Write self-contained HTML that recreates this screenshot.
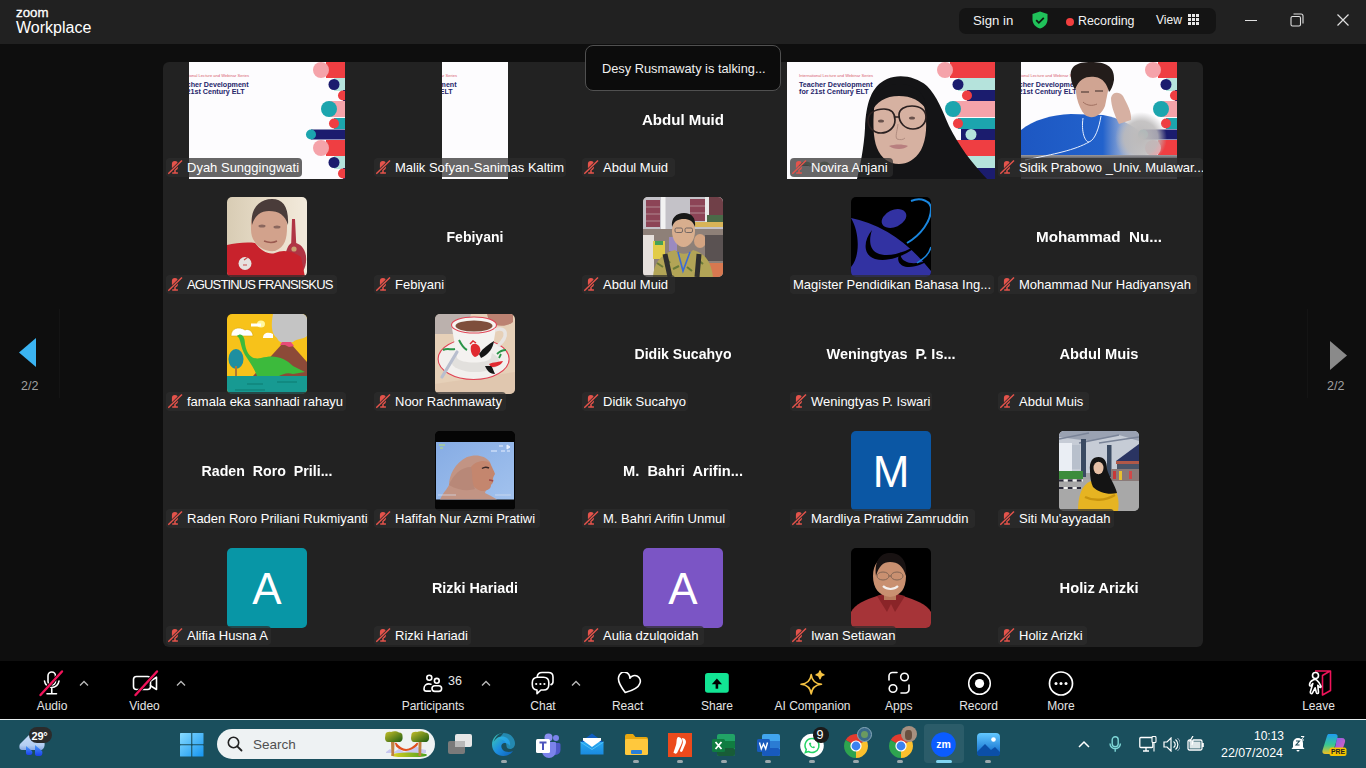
<!DOCTYPE html>
<html><head><meta charset="utf-8"><style>
*{margin:0;padding:0;box-sizing:border-box}
html,body{width:1366px;height:768px;overflow:hidden;background:#0e0e0e;font-family:"Liberation Sans",sans-serif;color:#fff}
.a{position:absolute}
#hdr{left:0;top:0;width:1366px;height:44px;background:#212121}
#panel{left:163px;top:62px;width:1040px;height:585px;background:#222222;border-radius:6px;overflow:hidden}
.tile{position:absolute;width:208px;height:117px;overflow:hidden}
.lbl{position:absolute;left:3px;bottom:2px;height:19px;border-radius:4px;background:rgba(44,44,44,0.72);white-space:nowrap;font-size:13px;line-height:19px;padding-left:21px;color:#fff}
.lbl svg{position:absolute;left:2px;top:2px}
.bn{position:absolute;left:0;width:208px;text-align:center;font-weight:bold;font-size:15.5px;white-space:nowrap;top:49px;color:#fff;transform-origin:104px 50%}
.av{position:absolute;left:64px;top:18px;width:80px;height:80px;border-radius:5px;overflow:hidden}
.letter{font-size:44px;text-align:center;line-height:81px;color:#fff}
#tb{left:0;top:661px;width:1366px;height:58px;background:#000}
#line{left:0;top:719px;width:1366px;height:1px;background:#e8eef0}
#task{left:0;top:720px;width:1366px;height:48px;background:#1a4f5d}
.tl{position:absolute;font-size:12px;color:#e6e6e6;white-space:nowrap;top:697px;text-align:center;width:100px}
</style></head><body>
<svg width="0" height="0" style="position:absolute"><defs><mask id="micmask" maskUnits="userSpaceOnUse" x="0" y="0" width="16" height="16"><rect width="16" height="16" fill="#fff"/><path d="M0.3 13.8L14 0.5" stroke="#000" stroke-width="3"/></mask></defs></svg>
<div id="hdr" class="a"></div>
<div class="a" style="left:16px;top:6px;font-size:13.3px;line-height:13px;color:#fff;letter-spacing:0px;-webkit-text-stroke:0.3px #fff">zoom</div>
<div class="a" style="left:16px;top:19px;font-size:16px;color:#fff">Workplace</div>
<div id="panel" class="a"><div class="tile" style="left:0px;top:0px"><svg class="a" style="left:26px;top:0" width="156" height="117" viewBox="26 0 156 117"><rect x="0" y="0" width="208" height="117" fill="#fdfcfe"/><text x="12" y="15" font-family="Liberation Sans" font-size="3.8" fill="#d86070" textLength="74" lengthAdjust="spacingAndGlyphs">International Lecture and Webinar  Series</text><text x="12" y="25" font-family="Liberation Sans" font-weight="bold" font-size="7.8" fill="#25256a" textLength="73.6" lengthAdjust="spacingAndGlyphs">Teacher Development</text><text x="12" y="32.3" font-family="Liberation Sans" font-weight="bold" font-size="7.8" fill="#25256a" textLength="69.7" lengthAdjust="spacingAndGlyphs">for 21st Century ELT</text><rect x="163" y="0" width="45" height="16" fill="#ef3e42"/><circle cx="158" cy="8" r="8" fill="#f5a3aa"/><rect x="171" y="16" width="37" height="13" fill="#b5e3dc"/><circle cx="171" cy="22.5" r="5.5" fill="#1b1c6e"/><rect x="180" y="28" width="28" height="11" fill="#1b1c6e"/><circle cx="180" cy="33.5" r="5" fill="#ef3e42"/><rect x="166" y="39" width="42" height="16" fill="#f5a3aa"/><circle cx="166" cy="47" r="8" fill="#1ca5ae"/><rect x="171" y="56" width="37" height="11" fill="#1ca5ae"/><circle cx="171" cy="61.5" r="5" fill="#ef3e42"/><rect x="148" y="67.5" width="60" height="10" fill="#1b1c6e"/><circle cx="148" cy="72.5" r="5" fill="#1ca5ae"/><rect x="163" y="78" width="45" height="16" fill="#ef3e42"/><circle cx="158" cy="86" r="8" fill="#f5a3aa"/><rect x="171" y="94" width="37" height="13" fill="#b5e3dc"/><circle cx="171" cy="100.5" r="5.5" fill="#1b1c6e"/><rect x="180" y="106" width="28" height="11" fill="#1b1c6e"/><circle cx="180" cy="111.5" r="5" fill="#ef3e42"/></svg><div class="lbl" style="width:136px"><svg width="16" height="16" viewBox="0 0 16 16"><g fill="#e5534b" mask="url(#micmask)"><rect x="3.9" y="1" width="6" height="9.2" rx="3"/><path d="M7 10v2.6M4.2 12.9h5.7" stroke="#e5534b" stroke-width="1.5"/></g><path d="M0.3 13.8L14 0.5" stroke="#e5534b" stroke-width="1.4"/></svg>Dyah Sunggingwati</div></div><div class="tile" style="left:208px;top:0px"><svg class="a" style="left:71px;top:0" width="66" height="117" viewBox="71 0 66 117"><rect x="0" y="0" width="208" height="117" fill="#fdfcfe"/><text x="12" y="15" font-family="Liberation Sans" font-size="3.8" fill="#d86070" textLength="74" lengthAdjust="spacingAndGlyphs">International Lecture and Webinar  Series</text><text x="12" y="25" font-family="Liberation Sans" font-weight="bold" font-size="7.8" fill="#25256a" textLength="73.6" lengthAdjust="spacingAndGlyphs">Teacher Development</text><text x="12" y="32.3" font-family="Liberation Sans" font-weight="bold" font-size="7.8" fill="#25256a" textLength="69.7" lengthAdjust="spacingAndGlyphs">for 21st Century ELT</text><rect x="163" y="0" width="45" height="16" fill="#ef3e42"/><circle cx="158" cy="8" r="8" fill="#f5a3aa"/><rect x="171" y="16" width="37" height="13" fill="#b5e3dc"/><circle cx="171" cy="22.5" r="5.5" fill="#1b1c6e"/><rect x="180" y="28" width="28" height="11" fill="#1b1c6e"/><circle cx="180" cy="33.5" r="5" fill="#ef3e42"/><rect x="166" y="39" width="42" height="16" fill="#f5a3aa"/><circle cx="166" cy="47" r="8" fill="#1ca5ae"/><rect x="171" y="56" width="37" height="11" fill="#1ca5ae"/><circle cx="171" cy="61.5" r="5" fill="#ef3e42"/><rect x="148" y="67.5" width="60" height="10" fill="#1b1c6e"/><circle cx="148" cy="72.5" r="5" fill="#1ca5ae"/><rect x="163" y="78" width="45" height="16" fill="#ef3e42"/><circle cx="158" cy="86" r="8" fill="#f5a3aa"/><rect x="171" y="94" width="37" height="13" fill="#b5e3dc"/><circle cx="171" cy="100.5" r="5.5" fill="#1b1c6e"/><rect x="180" y="106" width="28" height="11" fill="#1b1c6e"/><circle cx="180" cy="111.5" r="5" fill="#ef3e42"/></svg><div class="lbl" style="width:192px"><svg width="16" height="16" viewBox="0 0 16 16"><g fill="#e5534b" mask="url(#micmask)"><rect x="3.9" y="1" width="6" height="9.2" rx="3"/><path d="M7 10v2.6M4.2 12.9h5.7" stroke="#e5534b" stroke-width="1.5"/></g><path d="M0.3 13.8L14 0.5" stroke="#e5534b" stroke-width="1.4"/></svg>Malik Sofyan-Sanimas Kaltim</div></div><div class="tile" style="left:416px;top:0px"><div class="bn" style="transform:scaleX(0.972)">Abdul Muid</div><div class="lbl" style="width:93px"><svg width="16" height="16" viewBox="0 0 16 16"><g fill="#e5534b" mask="url(#micmask)"><rect x="3.9" y="1" width="6" height="9.2" rx="3"/><path d="M7 10v2.6M4.2 12.9h5.7" stroke="#e5534b" stroke-width="1.5"/></g><path d="M0.3 13.8L14 0.5" stroke="#e5534b" stroke-width="1.4"/></svg>Abdul Muid</div></div><div class="tile" style="left:624px;top:0px"><svg class="a" style="left:0;top:0" width="208" height="117" viewBox="0 0 208 117"><rect x="0" y="0" width="208" height="117" fill="#fdfcfe"/><text x="12" y="15" font-family="Liberation Sans" font-size="3.8" fill="#d86070" textLength="74" lengthAdjust="spacingAndGlyphs">International Lecture and Webinar  Series</text><text x="12" y="25" font-family="Liberation Sans" font-weight="bold" font-size="7.8" fill="#25256a" textLength="73.6" lengthAdjust="spacingAndGlyphs">Teacher Development</text><text x="12" y="32.3" font-family="Liberation Sans" font-weight="bold" font-size="7.8" fill="#25256a" textLength="69.7" lengthAdjust="spacingAndGlyphs">for 21st Century ELT</text><rect x="163" y="0" width="45" height="16" fill="#ef3e42"/><circle cx="158" cy="8" r="8" fill="#f5a3aa"/><rect x="171" y="16" width="37" height="13" fill="#b5e3dc"/><circle cx="171" cy="22.5" r="5.5" fill="#1b1c6e"/><rect x="180" y="28" width="28" height="11" fill="#1b1c6e"/><circle cx="180" cy="33.5" r="5" fill="#ef3e42"/><rect x="166" y="39" width="42" height="16" fill="#f5a3aa"/><circle cx="166" cy="47" r="8" fill="#1ca5ae"/><rect x="171" y="56" width="37" height="11" fill="#1ca5ae"/><circle cx="171" cy="61.5" r="5" fill="#ef3e42"/><rect x="174" y="67" width="34" height="11" fill="#1b1c6e"/><circle cx="184" cy="72.5" r="5.5" fill="#b5e3dc"/><rect x="163" y="78" width="45" height="16" fill="#ef3e42"/><circle cx="158" cy="86" r="8" fill="#f5a3aa"/><rect x="171" y="94" width="37" height="13" fill="#b5e3dc"/><circle cx="171" cy="100.5" r="5.5" fill="#1b1c6e"/><rect x="180" y="106" width="28" height="11" fill="#1b1c6e"/><circle cx="180" cy="111.5" r="5" fill="#ef3e42"/><path d="M70 117C73 104 77 86 78 66C79 42 84 24 100 17C112 12 128 14 140 24C150 34 156 50 162 64C172 84 184 100 200 117z" fill="#141416"/><path d="M87 48C88 34 98 26 112 26C126 26 136 34 138 48C140 62 140 76 134 88C128 98 120 102 112 102C102 102 94 96 90 86C86 76 86 60 87 48z" fill="#d6b1a1"/><path d="M84 50C86 30 98 22 112 22C128 22 138 30 141 50C134 38 124 34 112 34C98 34 90 40 84 50z" fill="#141416"/><g fill="none" stroke="#2a2020" stroke-width="1.7"><path d="M81 58C81 51 88 47 97 47C104 47 108 51 108 58C108 66 101 71 94 71C86 71 81 65 81 58z"/><path d="M112 53C112 47 118 44 125 44C133 44 139 48 139 55C139 62 133 67 126 67C118 67 112 61 112 53z"/><path d="M107.5 55h5"/></g><path d="M102 84C108 82 116 82 121 84C117 88 107 88 102 84z" fill="#b87f7f"/><path d="M111 62C110 70 108 75 110 77C113 78 116 78 118 76" stroke="#b08c80" stroke-width="1" fill="none"/><ellipse cx="94" cy="59" rx="3" ry="1.6" fill="#3a2a28" opacity=".7"/><ellipse cx="125" cy="56" rx="3" ry="1.6" fill="#3a2a28" opacity=".7"/><path d="M12 104c4-4 10-4 12 0M32 104c3-4 8-4 10 0" stroke="#3a6a30" stroke-width="3" opacity=".5"/></svg><div class="lbl" style="width:103px"><svg width="16" height="16" viewBox="0 0 16 16"><g fill="#e5534b" mask="url(#micmask)"><rect x="3.9" y="1" width="6" height="9.2" rx="3"/><path d="M7 10v2.6M4.2 12.9h5.7" stroke="#e5534b" stroke-width="1.5"/></g><path d="M0.3 13.8L14 0.5" stroke="#e5534b" stroke-width="1.4"/></svg>Novira Anjani</div></div><div class="tile" style="left:832px;top:0px"><svg class="a" style="left:26px;top:0" width="156" height="117" viewBox="26 0 156 117"><rect x="0" y="0" width="208" height="117" fill="#fdfcfe"/><text x="12" y="15" font-family="Liberation Sans" font-size="3.8" fill="#d86070" textLength="74" lengthAdjust="spacingAndGlyphs">International Lecture and Webinar  Series</text><text x="12" y="25" font-family="Liberation Sans" font-weight="bold" font-size="7.8" fill="#25256a" textLength="73.6" lengthAdjust="spacingAndGlyphs">Teacher Development</text><text x="12" y="32.3" font-family="Liberation Sans" font-weight="bold" font-size="7.8" fill="#25256a" textLength="69.7" lengthAdjust="spacingAndGlyphs">for 21st Century ELT</text><rect x="163" y="0" width="45" height="16" fill="#ef3e42"/><circle cx="158" cy="8" r="8" fill="#f5a3aa"/><rect x="171" y="16" width="37" height="13" fill="#b5e3dc"/><circle cx="171" cy="22.5" r="5.5" fill="#1b1c6e"/><rect x="180" y="28" width="28" height="11" fill="#1b1c6e"/><circle cx="180" cy="33.5" r="5" fill="#ef3e42"/><rect x="166" y="39" width="42" height="16" fill="#f5a3aa"/><circle cx="166" cy="47" r="8" fill="#1ca5ae"/><rect x="171" y="56" width="37" height="11" fill="#1ca5ae"/><circle cx="171" cy="61.5" r="5" fill="#ef3e42"/><rect x="148" y="67.5" width="60" height="10" fill="#1b1c6e"/><circle cx="148" cy="72.5" r="5" fill="#1ca5ae"/><rect x="163" y="78" width="45" height="16" fill="#ef3e42"/><circle cx="158" cy="86" r="8" fill="#f5a3aa"/><rect x="171" y="94" width="37" height="13" fill="#b5e3dc"/><circle cx="171" cy="100.5" r="5.5" fill="#1b1c6e"/><rect x="180" y="106" width="28" height="11" fill="#1b1c6e"/><circle cx="180" cy="111.5" r="5" fill="#ef3e42"/><defs><radialGradient id="blur1" cx="0.5" cy="0.5" r="0.5"><stop offset="0" stop-color="#bcbaba"/><stop offset="0.65" stop-color="#bcbaba" stop-opacity=".85"/><stop offset="1" stop-color="#bcbaba" stop-opacity="0"/></radialGradient><linearGradient id="shirt" x1="0" y1="0" x2="1" y2="0"><stop offset="0" stop-color="#1d57c2"/><stop offset=".65" stop-color="#2262cc"/><stop offset=".85" stop-color="#6a88c0" stop-opacity=".6"/><stop offset="1" stop-color="#a0a8c0" stop-opacity="0"/></linearGradient><linearGradient id="kb" x1="0" y1="0" x2="0" y2="1"><stop offset="0" stop-color="#9a9aa0"/><stop offset=".15" stop-color="#5a5a5e"/><stop offset="1" stop-color="#3a3a3e"/></linearGradient></defs><path d="M26 68C38 58 56 53 76 52L108 53C124 56 136 62 148 72L152 94H26z" fill="url(#shirt)"/><ellipse cx="146" cy="76" rx="26" ry="26" fill="url(#blur1)"/><rect x="26" y="93" width="156" height="24" fill="url(#kb)"/><path d="M80 14C80 30 82 44 90 53C97 58 106 54 110 44L114 24C114 18 110 12 100 12z" fill="#d0a492"/><path d="M88 40C92 44 98 44 102 42" stroke="#a07060" stroke-width="1" fill="none"/><path d="M86 30h8M100 29h8" stroke="#3a2a26" stroke-width="1.2"/><path d="M76 16C74 4 82 0 96 0C110 0 120 4 119 18C118 24 116 28 114 30C112 22 108 16 100 15C92 14 84 16 80 28C78 24 76 20 76 16z" fill="#231c1a"/><path d="M116 36C117 30 124 29 128 34C132 42 137 50 136 58L124 62C120 54 116 44 116 36z" fill="#d6b0a2"/><path d="M88 56C86 70 90 80 94 80C100 78 104 66 106 54M94 80C80 88 60 92 30 98" stroke="#e8f0ff" stroke-width="1" fill="none"/></svg><div class="lbl" style="width:205px"><svg width="16" height="16" viewBox="0 0 16 16"><g fill="#e5534b" mask="url(#micmask)"><rect x="3.9" y="1" width="6" height="9.2" rx="3"/><path d="M7 10v2.6M4.2 12.9h5.7" stroke="#e5534b" stroke-width="1.5"/></g><path d="M0.3 13.8L14 0.5" stroke="#e5534b" stroke-width="1.4"/></svg>Sidik Prabowo _Univ. Mulawar...</div></div><div class="tile" style="left:0px;top:117px"><svg class="av" style="filter:blur(0.35px)" width="80" height="80" viewBox="0 0 80 80"><rect width="80" height="80" fill="#000"/><defs><linearGradient id="agbg" x1="0" y1="0" x2="1" y2="0"><stop offset="0" stop-color="#d8ccb4"/><stop offset=".6" stop-color="#eadfcc"/><stop offset="1" stop-color="#f2eadc"/></linearGradient></defs><rect width="80" height="80" fill="url(#agbg)"/><path d="M65 22l3 0 1.2 24c6 2 10 8 10 16 0 10-5 17-11 17s-10-7-10-17c0-8 3-14 6-16z" fill="#b03444"/><circle cx="67" cy="52" r="2.6" fill="#c8a070"/><path d="M24 30C23 18 30 11 42 11C54 11 61 18 60 30C60 42 58 50 48 54C38 55 30 50 26 42C24 38 24 34 24 30z" fill="#d2a28c"/><path d="M25 28C23 12 32 2 45 2C56 2 62 10 61 28C58 18 52 14 42 14C34 14 28 18 25 28z" fill="#4a3c3a"/><ellipse cx="35" cy="29" rx="3.5" ry="1.5" fill="#5a4040" opacity=".6"/><ellipse cx="50" cy="30" rx="3.5" ry="1.5" fill="#5a4040" opacity=".6"/><path d="M37 44C42 46 46 46 50 44" stroke="#9a5a50" stroke-width="1.4" fill="none"/><path d="M0 48C8 46 20 45 28 46C34 54 42 58 48 56C56 52 66 54 74 60L78 80H0z" fill="#c8222c"/><circle cx="18" cy="66.5" r="6.5" fill="#e6e2e0"/><path d="M17 63l4-3M16 68h4" stroke="#c84848" stroke-width="1.2"/></svg><div class="lbl" style="width:171px"><svg width="16" height="16" viewBox="0 0 16 16"><g fill="#e5534b" mask="url(#micmask)"><rect x="3.9" y="1" width="6" height="9.2" rx="3"/><path d="M7 10v2.6M4.2 12.9h5.7" stroke="#e5534b" stroke-width="1.5"/></g><path d="M0.3 13.8L14 0.5" stroke="#e5534b" stroke-width="1.4"/></svg><span style="letter-spacing:-0.85px">AGUSTINUS FRANSISKUS</span></div></div><div class="tile" style="left:208px;top:117px"><div class="bn" style="transform:scaleX(0.906)">Febiyani</div><div class="lbl" style="width:72px"><svg width="16" height="16" viewBox="0 0 16 16"><g fill="#e5534b" mask="url(#micmask)"><rect x="3.9" y="1" width="6" height="9.2" rx="3"/><path d="M7 10v2.6M4.2 12.9h5.7" stroke="#e5534b" stroke-width="1.5"/></g><path d="M0.3 13.8L14 0.5" stroke="#e5534b" stroke-width="1.4"/></svg>Febiyani</div></div><div class="tile" style="left:416px;top:117px"><svg class="av" style="filter:blur(0.35px)" width="80" height="80" viewBox="0 0 80 80"><rect width="80" height="80" fill="#887"/><rect width="80" height="80" fill="#b0a8a4"/><rect x="0" y="0" width="80" height="32" fill="#c4c2c8"/><rect x="3" y="3" width="14" height="27" fill="#8c4456"/><path d="M3 10h14M3 17h14M3 24h14" stroke="#b08890" stroke-width="1"/><rect x="18" y="0" width="4.5" height="36" fill="#f2f2f2"/><rect x="47" y="2" width="15" height="22" fill="#8c4456"/><path d="M47 9h15M47 16h15" stroke="#b08890" stroke-width="1"/><rect x="62" y="0" width="4" height="30" fill="#e8e8e8"/><rect x="66" y="0" width="14" height="20" fill="#704048"/><rect x="64" y="18" width="16" height="8" fill="#4a6a48"/><rect x="52" y="25" width="28" height="5" fill="#d8b458"/><rect x="0" y="32" width="80" height="48" fill="#8e8078"/><rect x="0" y="38" width="11" height="42" fill="#e6e0dc"/><rect x="10" y="44" width="12" height="18" fill="#e2cc48"/><rect x="12" y="44" width="8" height="4" fill="#44a058"/><rect x="26" y="40" width="8" height="14" fill="#9a8ac0"/><ellipse cx="57" cy="44" rx="6" ry="7" fill="#d4a482"/><rect x="62" y="38" width="18" height="26" fill="#5a5252"/><rect x="66" y="66" width="14" height="14" fill="#d87850"/><ellipse cx="40.5" cy="34" rx="11.5" ry="16" fill="#d8ae8e"/><path d="M29 30C28 21 33 16 41 16C49 16 53 21 52 30C50 24 46 22 41 22C35 22 31 24 29 30z" fill="#181818"/><g fill="none" stroke="#6a6060" stroke-width=".9"><rect x="32" y="31" width="7.5" height="4.5" rx="1.5"/><rect x="42" y="31" width="7.5" height="4.5" rx="1.5"/></g><path d="M10 80C11 64 20 56 32 53C36 58 46 58 50 53C60 56 68 62 70 80z" fill="#b2a456"/><path d="M14 66l6 4M22 60l5 6M54 62l6 5M44 70l5 4M30 72l6-3" stroke="#6a7a38" stroke-width="2"/><path d="M22 57L27 80M56 57L54 80" stroke="#2e2e2e" stroke-width="5"/><path d="M35 55L40 74L47 55" stroke="#3a6ad8" stroke-width="1.6" fill="none"/></svg><div class="lbl" style="width:93px"><svg width="16" height="16" viewBox="0 0 16 16"><g fill="#e5534b" mask="url(#micmask)"><rect x="3.9" y="1" width="6" height="9.2" rx="3"/><path d="M7 10v2.6M4.2 12.9h5.7" stroke="#e5534b" stroke-width="1.5"/></g><path d="M0.3 13.8L14 0.5" stroke="#e5534b" stroke-width="1.4"/></svg>Abdul Muid</div></div><div class="tile" style="left:624px;top:117px"><svg class="av" style="filter:blur(0.35px)" width="80" height="80" viewBox="0 0 80 80"><rect width="80" height="80" fill="#000"/><path d="M0 21Q45 30 80 74V80H0V70C9 60 9 36 0 21z" fill="#3232a2"/><ellipse cx="43" cy="21.5" rx="13" ry="8.5" transform="rotate(-25 43 21.5)" fill="#3232a2"/><path d="M21 33C12 44 12 58 24 62C40 66 60 56 72 44C58 54 38 62 26 56C18 52 18 42 21 33z" fill="#000"/><path d="M50 55C44 62 48 70 58 70C66 70 74 66 80 62C72 66 60 68 54 64C50 62 49 58 50 55z" fill="#000"/><path d="M60 4C70 0 80 4 80 12C80 24 70 38 56 46" stroke="#1a86de" stroke-width="2" fill="none"/><path d="M80 50C78 58 72 62 66 66" stroke="#1a86de" stroke-width="1.5" fill="none"/></svg><div class="lbl" style="width:204px;padding-left:3px">Magister Pendidikan Bahasa Ing...</div></div><div class="tile" style="left:832px;top:117px"><div class="bn" style="transform:scaleX(0.982)">Mohammad&nbsp; Nu...</div><div class="lbl" style="width:199px"><svg width="16" height="16" viewBox="0 0 16 16"><g fill="#e5534b" mask="url(#micmask)"><rect x="3.9" y="1" width="6" height="9.2" rx="3"/><path d="M7 10v2.6M4.2 12.9h5.7" stroke="#e5534b" stroke-width="1.5"/></g><path d="M0.3 13.8L14 0.5" stroke="#e5534b" stroke-width="1.4"/></svg>Mohammad Nur Hadiyansyah</div></div><div class="tile" style="left:0px;top:234px"><svg class="av" style="filter:blur(0.35px)" width="80" height="80" viewBox="0 0 80 80"><rect width="80" height="80" fill="#000"/><rect width="80" height="80" fill="#f7c21a"/><path d="M46 0H80V22C76 26 70 24 66 28C60 30 52 30 50 24C44 20 44 10 46 0z" fill="#c4c4c4"/><path d="M26 62L55 30H64L80 48V62z" fill="#8c4a38"/><path d="M53 31L55 28H64L67 32L62 33L58 31z" fill="#e84c78"/><path d="M4 22C4 14 12 12 18 16C22 14 26 18 26 22z" fill="#fff" stroke="#d8a800" stroke-width=".6"/><path d="M36 24C36 18 42 18 46 20V24z" fill="#fff"/><ellipse cx="34" cy="10" rx="4" ry="3.5" fill="#fff8a0"/><path d="M24 11h10" stroke="#fff" stroke-width="3"/><ellipse cx="9" cy="45" rx="7.5" ry="10" fill="#1e8fa0"/><rect x="8" y="52" width="2" height="10" fill="#b07830"/><path d="M10 22C14 18 18 22 18 30C20 42 26 46 34 44C48 40 58 44 66 52L78 58L66 60C60 58 56 60 52 62H30C28 56 24 50 20 44C14 36 14 28 12 24z" fill="#3cba3c"/><rect y="62" width="80" height="18" fill="#179a92"/><path d="M8 76h30M50 68h20M20 70h16" stroke="#0d7a70" stroke-width="1"/></svg><div class="lbl" style="width:180px"><svg width="16" height="16" viewBox="0 0 16 16"><g fill="#e5534b" mask="url(#micmask)"><rect x="3.9" y="1" width="6" height="9.2" rx="3"/><path d="M7 10v2.6M4.2 12.9h5.7" stroke="#e5534b" stroke-width="1.5"/></g><path d="M0.3 13.8L14 0.5" stroke="#e5534b" stroke-width="1.4"/></svg>famala eka sanhadi rahayu</div></div><div class="tile" style="left:208px;top:234px"><svg class="av" style="filter:blur(0.35px)" width="80" height="80" viewBox="0 0 80 80"><rect width="80" height="80" fill="#000"/><rect width="80" height="80" fill="#e6d0b8"/><path d="M0 0H36L30 20H0z" fill="#a8a4a8" opacity=".7"/><path d="M52 0H78V8C70 14 60 12 54 8z" fill="#bc8272"/><path d="M0 70L80 58V80H0z" fill="#dcc2a8" opacity=".6"/><ellipse cx="38.6" cy="45" rx="35.5" ry="20.5" fill="#f2f0ee" stroke="#e04455" stroke-width="1.1"/><ellipse cx="40" cy="47" rx="24" ry="11" fill="#dcd8d6" opacity=".7"/><path d="M16.5 11H61.5L56 44C52 50 26 50 22 44z" fill="#f4f2f0"/><ellipse cx="39" cy="11" rx="22.5" ry="8" fill="#f6f4f2" stroke="#e04455" stroke-width="1.1"/><ellipse cx="39" cy="12" rx="18.5" ry="5.5" fill="#7e4e3c"/><path d="M60 16C72 12 74 22 63 32" stroke="#e8e4e2" stroke-width="3.5" fill="none"/><path d="M36 32C38 28 44 30 45 34C46 38 44 42 40 43C37 42 35 37 36 32z" fill="#e02a30"/><path d="M35 30l3-3 3 2" stroke="#e02a30" stroke-width="1.5" fill="none"/><path d="M44 40C48 34 54 30 59 27C58 34 54 40 46 44z" fill="#161616"/><path d="M8 36C12 34 16 36 20 35M24 26C26 30 28 34 32 36" stroke="#2a9448" stroke-width="2" fill="none"/><path d="M62 40C64 38 68 36 71 36M64 44l2-4" stroke="#2a9448" stroke-width="1.8" fill="none"/><path d="M54 50C58 48 64 48 68 47C66 51 62 53 56 53z" fill="#e02a30"/><path d="M50 52C52 56 54 60 60 60C58 56 58 54 56 52z" fill="#161616"/><path d="M22 38L7 63" stroke="#b8bece" stroke-width="3.2" stroke-linecap="round"/></svg><div class="lbl" style="width:132px"><svg width="16" height="16" viewBox="0 0 16 16"><g fill="#e5534b" mask="url(#micmask)"><rect x="3.9" y="1" width="6" height="9.2" rx="3"/><path d="M7 10v2.6M4.2 12.9h5.7" stroke="#e5534b" stroke-width="1.5"/></g><path d="M0.3 13.8L14 0.5" stroke="#e5534b" stroke-width="1.4"/></svg>Noor Rachmawaty</div></div><div class="tile" style="left:416px;top:234px"><div class="bn" style="transform:scaleX(0.908)">Didik Sucahyo</div><div class="lbl" style="width:106px"><svg width="16" height="16" viewBox="0 0 16 16"><g fill="#e5534b" mask="url(#micmask)"><rect x="3.9" y="1" width="6" height="9.2" rx="3"/><path d="M7 10v2.6M4.2 12.9h5.7" stroke="#e5534b" stroke-width="1.5"/></g><path d="M0.3 13.8L14 0.5" stroke="#e5534b" stroke-width="1.4"/></svg>Didik Sucahyo</div></div><div class="tile" style="left:624px;top:234px"><div class="bn" style="transform:scaleX(0.934)">Weningtyas&nbsp; P. Is...</div><div class="lbl" style="width:142px"><svg width="16" height="16" viewBox="0 0 16 16"><g fill="#e5534b" mask="url(#micmask)"><rect x="3.9" y="1" width="6" height="9.2" rx="3"/><path d="M7 10v2.6M4.2 12.9h5.7" stroke="#e5534b" stroke-width="1.5"/></g><path d="M0.3 13.8L14 0.5" stroke="#e5534b" stroke-width="1.4"/></svg>Weningtyas P. Iswari</div></div><div class="tile" style="left:832px;top:234px"><div class="bn" style="transform:scaleX(0.946)">Abdul Muis</div><div class="lbl" style="width:91px"><svg width="16" height="16" viewBox="0 0 16 16"><g fill="#e5534b" mask="url(#micmask)"><rect x="3.9" y="1" width="6" height="9.2" rx="3"/><path d="M7 10v2.6M4.2 12.9h5.7" stroke="#e5534b" stroke-width="1.5"/></g><path d="M0.3 13.8L14 0.5" stroke="#e5534b" stroke-width="1.4"/></svg>Abdul Muis</div></div><div class="tile" style="left:0px;top:351px"><div class="bn" style="transform:scaleX(0.916)">Raden&nbsp; Roro&nbsp; Prili...</div><div class="lbl" style="width:203px"><svg width="16" height="16" viewBox="0 0 16 16"><g fill="#e5534b" mask="url(#micmask)"><rect x="3.9" y="1" width="6" height="9.2" rx="3"/><path d="M7 10v2.6M4.2 12.9h5.7" stroke="#e5534b" stroke-width="1.5"/></g><path d="M0.3 13.8L14 0.5" stroke="#e5534b" stroke-width="1.4"/></svg>Raden Roro Priliani Rukmiyanti</div></div><div class="tile" style="left:208px;top:351px"><svg class="av" style="filter:blur(0.35px)" width="80" height="80" viewBox="0 0 80 80"><rect width="80" height="80" fill="#000"/><defs><linearGradient id="hsky" x1="0" y1="0" x2="1" y2="1"><stop offset="0" stop-color="#86ace4"/><stop offset="1" stop-color="#a2c2ee"/></linearGradient></defs><rect width="80" height="80" fill="#050505"/><rect x="1" y="11" width="78" height="57.5" fill="url(#hsky)"/><path d="M5 68.5C8 62 12 58 14 54C14 44 20 32 32 26C40 23 50 24 55 31L56 36C54 48 52 56 50 62C54 64 58 66 62 68.5z" fill="#c29484"/><path d="M36 36C40 30 50 28 55 32C57 36 59 40 60 43C59 45 58 46 58 48C59 50 58 52 56 54C56 58 52 60 46 60C40 58 34 52 33 46C33 42 34 38 36 36z" fill="#c4866e"/><path d="M14 54C18 44 26 36 36 36C38 42 36 50 40 58C34 60 24 60 14 54z" fill="#b88878"/><path d="M47 37.5C49 36 52 36 54 37" stroke="#3a2828" stroke-width="1.5" fill="none"/><path d="M54 49C56 49 58 50 58 50" stroke="#a04848" stroke-width="1.6"/><path d="M4 14h6M5 17h3" stroke="#b8e070" stroke-width="1.2"/><path d="M64 15h4M72 14l3 2-3 2z" stroke="#e8f0ff" stroke-width="1" fill="#e8f0ff"/><path d="M56 20h6M66 20h4M72 20h3" stroke="#e8f0ff" stroke-width="1.2"/><path d="M3 64h18M60 64h16" stroke="#d8e0f0" stroke-width="1" opacity=".7"/></svg><div class="lbl" style="width:166px"><svg width="16" height="16" viewBox="0 0 16 16"><g fill="#e5534b" mask="url(#micmask)"><rect x="3.9" y="1" width="6" height="9.2" rx="3"/><path d="M7 10v2.6M4.2 12.9h5.7" stroke="#e5534b" stroke-width="1.5"/></g><path d="M0.3 13.8L14 0.5" stroke="#e5534b" stroke-width="1.4"/></svg>Hafifah Nur Azmi Pratiwi</div></div><div class="tile" style="left:416px;top:351px"><div class="bn" style="transform:scaleX(0.946)">M.&nbsp; Bahri&nbsp; Arifin...</div><div class="lbl" style="width:148px"><svg width="16" height="16" viewBox="0 0 16 16"><g fill="#e5534b" mask="url(#micmask)"><rect x="3.9" y="1" width="6" height="9.2" rx="3"/><path d="M7 10v2.6M4.2 12.9h5.7" stroke="#e5534b" stroke-width="1.5"/></g><path d="M0.3 13.8L14 0.5" stroke="#e5534b" stroke-width="1.4"/></svg>M. Bahri Arifin Unmul</div></div><div class="tile" style="left:624px;top:351px"><div class="av letter" style="background:#0b57a4">M</div><div class="lbl" style="width:185px"><svg width="16" height="16" viewBox="0 0 16 16"><g fill="#e5534b" mask="url(#micmask)"><rect x="3.9" y="1" width="6" height="9.2" rx="3"/><path d="M7 10v2.6M4.2 12.9h5.7" stroke="#e5534b" stroke-width="1.5"/></g><path d="M0.3 13.8L14 0.5" stroke="#e5534b" stroke-width="1.4"/></svg>Mardliya Pratiwi Zamruddin</div></div><div class="tile" style="left:832px;top:351px"><svg class="av" style="filter:blur(0.35px)" width="80" height="80" viewBox="0 0 80 80"><rect width="80" height="80" fill="#000"/><rect width="80" height="80" fill="#a2a4a6"/><rect width="80" height="42" fill="#c6ccd6"/><path d="M0 0H80V10L60 4L30 10L0 6z" fill="#9aa2b2"/><path d="M0 8L30 2M20 12L60 4M40 12L80 6" stroke="#7a8498" stroke-width="1.5"/><rect x="0" y="12" width="13" height="28" fill="#eaeef4"/><rect x="13" y="14" width="8" height="24" fill="#b8c0cc"/><rect x="22" y="8" width="5" height="38" fill="#3a4a62"/><rect x="48" y="14" width="4.5" height="32" fill="#3a4a62"/><path d="M57 30L80 13V31H57z" fill="#2a3462"/><rect x="57" y="30" width="23" height="3" fill="#b05848"/><rect x="58" y="33" width="22" height="8" fill="#4a5468"/><rect x="0" y="40" width="24" height="8" fill="#3c8c3c"/><rect x="0" y="48" width="80" height="32" fill="#a8a8a8"/><path d="M0 49.5h24M0 57h22" stroke="#2a2a3a" stroke-width="2" stroke-dasharray="5 4"/><path d="M0 49.5h24M0 57h22" stroke="#f0f0f0" stroke-width="2" stroke-dasharray="4 5" stroke-dashoffset="4.5"/><rect x="52" y="38" width="28" height="12" fill="#8a7a78"/><rect x="54" y="40" width="3" height="8" fill="#c83838"/><rect x="60" y="40" width="3" height="9" fill="#e8c030"/><rect x="70" y="40" width="3" height="8" fill="#d04848"/><path d="M19 80C19 66 22 54 32 50C40 50 50 52 56 58C60 66 60 74 59 80z" fill="#e6b422"/><path d="M31 40C30 30 34 26 39.5 26C45 26 48 30 48 38C50 46 56 54 58 62C50 64 40 62 34 56C32 52 31 46 31 40z" fill="#141414"/><ellipse cx="39.5" cy="37" rx="5" ry="6.2" fill="#e6c0a6"/><path d="M26 66C34 70 46 70 56 64" stroke="#c8940e" stroke-width="2.5" fill="none"/></svg><div class="lbl" style="width:116px"><svg width="16" height="16" viewBox="0 0 16 16"><g fill="#e5534b" mask="url(#micmask)"><rect x="3.9" y="1" width="6" height="9.2" rx="3"/><path d="M7 10v2.6M4.2 12.9h5.7" stroke="#e5534b" stroke-width="1.5"/></g><path d="M0.3 13.8L14 0.5" stroke="#e5534b" stroke-width="1.4"/></svg>Siti Mu'ayyadah</div></div><div class="tile" style="left:0px;top:468px"><div class="av letter" style="background:#0896a6">A</div><div class="lbl" style="width:105px"><svg width="16" height="16" viewBox="0 0 16 16"><g fill="#e5534b" mask="url(#micmask)"><rect x="3.9" y="1" width="6" height="9.2" rx="3"/><path d="M7 10v2.6M4.2 12.9h5.7" stroke="#e5534b" stroke-width="1.5"/></g><path d="M0.3 13.8L14 0.5" stroke="#e5534b" stroke-width="1.4"/></svg>Alifia Husna A</div></div><div class="tile" style="left:208px;top:468px"><div class="bn" style="transform:scaleX(0.925)">Rizki Hariadi</div><div class="lbl" style="width:97px"><svg width="16" height="16" viewBox="0 0 16 16"><g fill="#e5534b" mask="url(#micmask)"><rect x="3.9" y="1" width="6" height="9.2" rx="3"/><path d="M7 10v2.6M4.2 12.9h5.7" stroke="#e5534b" stroke-width="1.5"/></g><path d="M0.3 13.8L14 0.5" stroke="#e5534b" stroke-width="1.4"/></svg>Rizki Hariadi</div></div><div class="tile" style="left:416px;top:468px"><div class="av letter" style="background:#7b55c5">A</div><div class="lbl" style="width:122px"><svg width="16" height="16" viewBox="0 0 16 16"><g fill="#e5534b" mask="url(#micmask)"><rect x="3.9" y="1" width="6" height="9.2" rx="3"/><path d="M7 10v2.6M4.2 12.9h5.7" stroke="#e5534b" stroke-width="1.5"/></g><path d="M0.3 13.8L14 0.5" stroke="#e5534b" stroke-width="1.4"/></svg>Aulia dzulqoidah</div></div><div class="tile" style="left:624px;top:468px"><svg class="av" style="filter:blur(0.35px)" width="80" height="80" viewBox="0 0 80 80"><rect width="80" height="80" fill="#000"/><path d="M0 64C4 56 14 52 26 48L38 44L52 48C64 52 76 56 80 64V80H0z" fill="#a63438"/><path d="M26 48L36 64L40 56L44 64L54 48L46 46H34z" fill="#8a2428"/><rect x="33" y="40" width="12" height="12" fill="#b87a5c"/><path d="M22 28C22 16 28 9 38 9C48 9 55 16 55 28C55 40 50 48 39 49C28 48 22 40 22 28z" fill="#c99070"/><path d="M25 28C23 12 30 5 39 5C49 5 57 12 55 28C52 18 47 14 39 14C32 14 28 18 25 28z" fill="#181212"/><g fill="none" stroke="#7a6050" stroke-width=".9"><ellipse cx="32" cy="28" rx="6" ry="4"/><ellipse cx="46" cy="28" rx="6" ry="4"/><path d="M38 28h2"/></g><path d="M32 38C36 42 43 42 47 38" stroke="#f4f0ee" stroke-width="2.2" fill="none"/></svg><div class="lbl" style="width:106px"><svg width="16" height="16" viewBox="0 0 16 16"><g fill="#e5534b" mask="url(#micmask)"><rect x="3.9" y="1" width="6" height="9.2" rx="3"/><path d="M7 10v2.6M4.2 12.9h5.7" stroke="#e5534b" stroke-width="1.5"/></g><path d="M0.3 13.8L14 0.5" stroke="#e5534b" stroke-width="1.4"/></svg>Iwan Setiawan</div></div><div class="tile" style="left:832px;top:468px"><div class="bn" style="transform:scaleX(0.952)">Holiz Arizki</div><div class="lbl" style="width:89px"><svg width="16" height="16" viewBox="0 0 16 16"><g fill="#e5534b" mask="url(#micmask)"><rect x="3.9" y="1" width="6" height="9.2" rx="3"/><path d="M7 10v2.6M4.2 12.9h5.7" stroke="#e5534b" stroke-width="1.5"/></g><path d="M0.3 13.8L14 0.5" stroke="#e5534b" stroke-width="1.4"/></svg>Holiz Arizki</div></div></div>
<div id="tb" class="a"></div>
<div id="line" class="a"></div>
<div id="task" class="a"></div>
<div class="a" style="left:959px;top:8px;width:257px;height:26px;border-radius:7px;background:#141414"></div><div class="a" style="left:973px;top:14px;font-size:13.2px;color:#f2f2f2;font-weight:400;white-space:nowrap;line-height:1">Sign in</div><svg class="a" style="left:1031px;top:11px" width="18" height="18" viewBox="0 0 18 18"><path d="M9 0.5L16.5 3v5.5c0 4.5-3.2 7.6-7.5 9-4.3-1.4-7.5-4.5-7.5-9V3z" fill="#20c25a"/><path d="M5.2 9.2l2.6 2.6 5-5" stroke="#0d1a10" stroke-width="1.8" fill="none"/></svg><div class="a" style="left:1066px;top:18px;width:8px;height:8px;border-radius:50%;background:#f23f3f"></div><div class="a" style="left:1078px;top:15px;font-size:12.4px;color:#f2f2f2;font-weight:400;white-space:nowrap;line-height:1">Recording</div><div class="a" style="left:1156px;top:14px;font-size:12px;color:#f2f2f2;font-weight:400;white-space:nowrap;line-height:1">View</div><svg class="a" style="left:1188px;top:14px" width="11" height="11" viewBox="0 0 11 11" fill="#e8e8e8"><rect x="0" y="0" width="3" height="3"/><rect x="0" y="4" width="3" height="3"/><rect x="0" y="8" width="3" height="3"/><rect x="4" y="0" width="3" height="3"/><rect x="4" y="4" width="3" height="3"/><rect x="4" y="8" width="3" height="3"/><rect x="8" y="0" width="3" height="3"/><rect x="8" y="4" width="3" height="3"/><rect x="8" y="8" width="3" height="3"/></svg><div class="a" style="left:1245px;top:20px;width:12px;height:1px;background:#e0e0e0"></div><svg class="a" style="left:1290px;top:13px" width="14" height="14" viewBox="0 0 14 14" fill="none" stroke="#e0e0e0" stroke-width="1.1"><rect x="1" y="3.5" width="9.5" height="9.5" rx="1.5"/><path d="M3.5 1h7.5a2 2 0 0 1 2 2v7.5"/></svg><svg class="a" style="left:1337px;top:14px" width="12" height="12" viewBox="0 0 12 12" stroke="#e0e0e0" stroke-width="1.2"><path d="M0.5 0.5L11.5 11.5M11.5 0.5L0.5 11.5"/></svg><div class="a" style="left:585px;top:45px;width:196px;height:46px;border-radius:8px;background:#0c0c0c;border:1px solid #505050"></div><div class="a" style="left:602px;top:63px;font-size:12.8px;color:#f0f0f0;font-weight:400;white-space:nowrap;line-height:1">Desy Rusmawaty is talking...</div><div class="a" style="left:59px;top:309px;width:1px;height:89px;background:#141414"></div><div class="a" style="left:1307px;top:309px;width:1px;height:89px;background:#141414"></div><svg class="a" style="left:19px;top:338px" width="17" height="29" viewBox="0 0 17 29"><path d="M17 0V29L0 14.5z" fill="#3bb4f2"/></svg><div class="a" style="left:21px;top:380px;font-size:12.5px;color:#a0a0a0;font-weight:400;white-space:nowrap;line-height:1">2/2</div><svg class="a" style="left:1330px;top:341px" width="17" height="29" viewBox="0 0 17 29"><path d="M0 0V29L17 14.5z" fill="#8a8a8a"/></svg><div class="a" style="left:1327px;top:380px;font-size:12.5px;color:#a0a0a0;font-weight:400;white-space:nowrap;line-height:1">2/2</div><div class="a" style="left:-8px;top:700px;width:120px;text-align:center;font-size:12px;color:#e4e4e4;white-space:nowrap;line-height:1">Audio</div><div class="a" style="left:84.5px;top:700px;width:120px;text-align:center;font-size:12px;color:#e4e4e4;white-space:nowrap;line-height:1">Video</div><div class="a" style="left:373px;top:700px;width:120px;text-align:center;font-size:12px;color:#e4e4e4;white-space:nowrap;line-height:1">Participants</div><div class="a" style="left:483px;top:700px;width:120px;text-align:center;font-size:12px;color:#e4e4e4;white-space:nowrap;line-height:1">Chat</div><div class="a" style="left:567.6px;top:700px;width:120px;text-align:center;font-size:12px;color:#e4e4e4;white-space:nowrap;line-height:1">React</div><div class="a" style="left:657px;top:700px;width:120px;text-align:center;font-size:12px;color:#e4e4e4;white-space:nowrap;line-height:1">Share</div><div class="a" style="left:752.5px;top:700px;width:120px;text-align:center;font-size:12px;color:#e4e4e4;white-space:nowrap;line-height:1">AI Companion</div><div class="a" style="left:838.8px;top:700px;width:120px;text-align:center;font-size:12px;color:#e4e4e4;white-space:nowrap;line-height:1">Apps</div><div class="a" style="left:918.5px;top:700px;width:120px;text-align:center;font-size:12px;color:#e4e4e4;white-space:nowrap;line-height:1">Record</div><div class="a" style="left:1001px;top:700px;width:120px;text-align:center;font-size:12px;color:#e4e4e4;white-space:nowrap;line-height:1">More</div><div class="a" style="left:1258.5px;top:700px;width:120px;text-align:center;font-size:12px;color:#e4e4e4;white-space:nowrap;line-height:1">Leave</div><svg class="a" style="left:38px;top:669px" width="28" height="28" viewBox="0 0 28 28"><g stroke="#fff" fill="none" stroke-width="1.6" stroke-linecap="round" stroke-linejoin="round"><rect x="10" y="3" width="7.5" height="13" rx="3.75"/><path d="M6.5 12a7.3 7.3 0 0 0 14.5 0M13.75 19.5v5M9 24.8h9.5"/></g><path d="M2.5 26L24 2.5" stroke="#000" stroke-width="4"/><path d="M2.5 26L24 2.5" stroke="#f0135a" stroke-width="2.4" stroke-linecap="round"/></svg><svg class="a" style="left:132px;top:669px" width="28" height="28" viewBox="0 0 28 28"><g stroke="#fff" fill="none" stroke-width="1.6" stroke-linecap="round" stroke-linejoin="round"><rect x="1.5" y="7.5" width="17" height="13" rx="3"/><path d="M18.5 12l6-3.8v12.3l-6-3.8"/></g><path d="M3.5 26L25 2.5" stroke="#000" stroke-width="4"/><path d="M3.5 26L25 2.5" stroke="#f0135a" stroke-width="2.4" stroke-linecap="round"/></svg><svg class="a" style="left:79px;top:680px" width="10" height="7" viewBox="0 0 10 7"><path d="M1 5.5L5 1.5L9 5.5" stroke="#bbb" stroke-width="1.3" fill="none"/></svg><svg class="a" style="left:176px;top:680px" width="10" height="7" viewBox="0 0 10 7"><path d="M1 5.5L5 1.5L9 5.5" stroke="#bbb" stroke-width="1.3" fill="none"/></svg><svg class="a" style="left:481px;top:680px" width="10" height="7" viewBox="0 0 10 7"><path d="M1 5.5L5 1.5L9 5.5" stroke="#bbb" stroke-width="1.3" fill="none"/></svg><svg class="a" style="left:571px;top:680px" width="10" height="7" viewBox="0 0 10 7"><path d="M1 5.5L5 1.5L9 5.5" stroke="#bbb" stroke-width="1.3" fill="none"/></svg><svg class="a" style="left:415px;top:665px" width="30" height="30" viewBox="0 0 30 30"><g stroke="#fff" fill="none" stroke-width="1.6" stroke-linecap="round" stroke-linejoin="round" stroke-width="1.5"><circle cx="14.3" cy="12.7" r="2.5"/><circle cx="21.8" cy="15.8" r="2.4"/><path d="M15.9 19.2C14.5 18.8 12 18.8 10.5 20C9.3 21 9 22.5 9 24C9 25.5 9.8 26.1 11.2 26.1H15.5"/><rect x="17" y="20.8" width="9.6" height="5.6" rx="2.8"/></g></svg><div class="a" style="left:448px;top:675px;font-size:12.5px;color:#e8e8e8;font-weight:400;white-space:nowrap;line-height:1">36</div><svg class="a" style="left:530px;top:671px" width="25" height="24" viewBox="0 0 25 24"><g stroke="#fff" fill="none" stroke-width="1.6" stroke-linecap="round" stroke-linejoin="round" stroke-width="1.5"><path d="M7.2 5.6C7.5 3 9 1.6 12 1.5H18.5C21.5 1.5 23 3.2 23 6V10.5C23 12.3 22.2 13.3 21 13.6"/><path d="M8 6.2H13.5C17 6.2 18.8 8 18.8 11.5V13.5C18.8 17 17 19 13.5 19H11L7 22.6V19C4.2 18.8 2.3 17 2.3 13.5V11.5C2.3 8 4.5 6.2 8 6.2z"/></g><g fill="#fff"><circle cx="6.2" cy="13" r="1.1"/><circle cx="10.4" cy="13" r="1.1"/><circle cx="14.4" cy="13" r="1.1"/></g></svg><svg class="a" style="left:614px;top:672px" width="28" height="24" viewBox="0 0 28 24"><path stroke="#fff" fill="none" stroke-width="1.6" stroke-linecap="round" stroke-linejoin="round" transform="rotate(18 14 12)" d="M14 21C7.5 16.5 3 12.8 3 8.3A5.2 5.2 0 0 1 14 6A5.2 5.2 0 0 1 25 8.3C25 12.8 20.5 16.5 14 21z"/></svg><svg class="a" style="left:705px;top:673px" width="24" height="20" viewBox="0 0 24 20"><rect x="0" y="0" width="23.8" height="19.8" rx="2.8" fill="#12e594"/><path d="M6.8 11.2L11.9 5.6L17 11.2z" fill="#000"/><rect x="10.6" y="9.5" width="2.6" height="6.2" fill="#000"/></svg><svg class="a" style="left:799px;top:670px" width="27" height="26" viewBox="0 0 27 26" fill="none" stroke="#f5c242" stroke-width="1.6" stroke-linejoin="round"><path d="M12.2 4.5Q13.2 13.5 22.5 14.2Q13.2 15 12.2 24Q11.2 15 2 14.2Q11.2 13.5 12.2 4.5z"/><path d="M21 1Q21.5 4.2 24.8 4.8Q21.5 5.4 21 8.6Q20.5 5.4 17.2 4.8Q20.5 4.2 21 1z" fill="#f5c242"/></svg><svg class="a" style="left:887px;top:671px" width="24" height="24" viewBox="0 0 24 24"><g stroke="#fff" fill="none" stroke-width="1.6" stroke-linecap="round" stroke-linejoin="round"><path d="M2 9V5a3.5 3.5 0 0 1 3.5-3.5H10"/><path d="M22 14v4.5A3.5 3.5 0 0 1 18.5 22H14"/><circle cx="17.5" cy="6" r="3.8"/><circle cx="6" cy="17.5" r="3.8"/></g></svg><svg class="a" style="left:966.5px;top:670.5px" width="25" height="25" viewBox="0 0 25 25"><circle cx="12.5" cy="12.5" r="10.8" stroke="#fff" stroke-width="1.5" fill="none"/><circle cx="12.5" cy="12.5" r="4.6" fill="#fff"/></svg><svg class="a" style="left:1048px;top:671px" width="26" height="25" viewBox="0 0 26 25"><circle cx="13" cy="12.5" r="11.5" stroke="#fff" stroke-width="1.7" fill="none"/><g fill="#fff"><circle cx="8" cy="12.5" r="1.5"/><circle cx="13" cy="12.5" r="1.5"/><circle cx="18" cy="12.5" r="1.5"/></g></svg><svg class="a" style="left:1306px;top:670px" width="27" height="26" viewBox="0 0 27 26"><path d="M9 1h15.5v19.5L16.5 25V5.5L24 1" stroke="#f0135a" stroke-width="1.6" fill="none" stroke-linejoin="round"/><g stroke="#fff" fill="none" stroke-width="1.6" stroke-linecap="round" stroke-linejoin="round" stroke-width="1.4" transform="translate(1.5 0.5)"><circle cx="8" cy="5" r="3"/><path d="M5.5 9.5c-2 1-3.5 3-3.5 5 0 1 1 1.3 1.8.5l1.5-2-2.5 8.5c-.3 1.5 1.5 2.2 2.2.8l2.6-5 1.2 4.7c.4 1.4 2.3 1.2 2.2-.3l-.7-7 1.6 1.8c.8.8 2 .3 1.6-.8-.9-2.2-2.3-4.5-4.5-6.3-1.2-.8-2.4-.6-3.5.1z"/></g></svg>
<svg class="a" style="left:19px;top:727px" width="27" height="30" viewBox="0 0 27 30"><defs><linearGradient id="wc" x1="0" y1="0" x2="0" y2="1"><stop offset="0" stop-color="#c8dcf8"/><stop offset=".7" stop-color="#b4cef2"/><stop offset="1" stop-color="#8aa8e0"/></linearGradient><linearGradient id="wd" x1="0" y1="0" x2="0" y2="1"><stop offset="0" stop-color="#4a9af8"/><stop offset="1" stop-color="#1a40f0"/></linearGradient></defs><path d="M3 23C0 23 0 19 1 17L9 9C11 7 14 7 16 9L25 14C26 16 26 20 24 22C23 23 22 23 21 23z" fill="url(#wc)"/><path d="M7 19L13 24C14 26 13 28 11 28H9C8 28 7 27 7 26z" fill="url(#wd)"/><path d="M16 18L23 24C24 26 23 29 21 29H18C17 29 16 28 16 27z" fill="url(#wd)"/></svg><div class="a" style="left:28.5px;top:727px;width:23px;height:15.5px;border-radius:8px;background:#2b2b2b"></div><div class="a" style="left:31.5px;top:729.5px;font-size:11px;font-weight:bold;color:#fff;line-height:12px;white-space:nowrap;letter-spacing:-0.2px">29°</div><svg class="a" style="left:180px;top:733px" width="24" height="24" viewBox="0 0 24 24"><defs><linearGradient id="wl" gradientUnits="userSpaceOnUse" x1="0" y1="0" x2="23.5" y2="23.5"><stop offset="0" stop-color="#88dcff"/><stop offset="1" stop-color="#1494f0"/></linearGradient></defs><g fill="url(#wl)"><rect x="0" y="0" width="11.2" height="11.2" rx="0.6"/><rect x="12.3" y="0" width="11.2" height="11.2" rx="0.6"/><rect x="0" y="12.3" width="11.2" height="11.2" rx="0.6"/><rect x="12.3" y="12.3" width="11.2" height="11.2" rx="0.6"/></g></svg><div class="a" style="left:217px;top:729px;width:218px;height:30px;border-radius:15px;background:#eef2f3"></div><svg class="a" style="left:227px;top:736px" width="16" height="16" viewBox="0 0 16 16"><circle cx="6.5" cy="6.5" r="5.2" stroke="#222" stroke-width="1.6" fill="none"/><path d="M10.3 10.3L14.5 14.5" stroke="#222" stroke-width="1.8" stroke-linecap="round"/></svg><div class="a" style="left:253px;top:738px;font-size:13.5px;color:#505050;line-height:14px">Search</div><svg class="a" style="left:384px;top:730px" width="46" height="27" viewBox="0 0 46 27"><defs><linearGradient id="tr" x1="0" y1="0" x2="1" y2="1"><stop offset="0" stop-color="#c8c028"/><stop offset="1" stop-color="#1a5a12"/></linearGradient><linearGradient id="gr" x1="0" y1="0" x2="1" y2="0"><stop offset="0" stop-color="#e0d020"/><stop offset="1" stop-color="#4aa020"/></linearGradient><linearGradient id="hm" x1="0" y1="0" x2="0" y2="1"><stop offset="0" stop-color="#c02020"/><stop offset="1" stop-color="#f8a020"/></linearGradient></defs><path d="M2 22l4-3 4 3 5-3 5 3 6-2 6-4 5 3 5 1v3H2z" fill="#c8c8f0"/><ellipse cx="25" cy="25" rx="18" ry="2.5" fill="url(#gr)"/><path d="M1.5 4C2 2 5 1.5 7 2C9 1 13 1 15 2.5C17.5 2.5 18.5 4 18.5 6C19 9 18 11.5 16 12H4C2 12 1 10 1 8z" fill="url(#tr)"/><path d="M27.5 4C28 2 31 1.5 33 2C35 1 39 1 41 2.5C43.5 2.5 45 4 45 6C45.5 9 44.5 11.5 42.5 12H30C28 12 27 10 27 8z" fill="url(#tr)"/><path d="M7 12h3.5l-.5 14H7.5z" fill="#c08040"/><path d="M34.5 12H37.5L37.2 26H34.5z" fill="#c08040"/><path d="M11.5 13Q22 26 33.5 13L33 15Q22 25 12.5 16z" fill="url(#hm)" stroke="#e05020" stroke-width="1.2"/></svg><svg class="a" style="left:447px;top:733px" width="26" height="22" viewBox="0 0 26 22"><rect x="8" y="1" width="17" height="13" rx="2" fill="#e6e6e6"/><rect x="1" y="8" width="17" height="13" rx="2" fill="#7a7a7a"/><rect x="8" y="8" width="10" height="6" fill="#b8b8b8"/></svg><svg class="a" style="left:491px;top:732px" width="25" height="25" viewBox="0 0 25 25"><defs><linearGradient id="eg" x1="0" y1="0" x2="1" y2="1"><stop offset="0" stop-color="#3fd0b0"/><stop offset=".5" stop-color="#1e8fe0"/><stop offset="1" stop-color="#0c5fb8"/></linearGradient></defs><path d="M12.5 1C5.5 1 1 6.5 1 12.5 1 19.5 6.5 24 12.5 24c4 0 7.5-2 9.5-5-3 1.5-8 1.5-10.5-1.5-2-2.5-1.5-6 1.5-6.5 3-.5 5 1 6 3 1-5-2.5-9.5-8-9.5C6.5 4.5 3 8 2.5 11 3.5 5 8 1 12.5 1z" fill="url(#eg)"/><path d="M12.5 1C19 1 24 6 24 11.5c0 3-2 5.5-5 5.5-2 0-3.5-1-3.5-3 0-4-3-7-8-7" fill="#2bb0e8" opacity=".6"/></svg><svg class="a" style="left:535px;top:733px" width="26" height="25" viewBox="0 0 26 25"><circle cx="21" cy="5" r="3" fill="#7b83eb"/><path d="M15 10h9a1.5 1.5 0 0 1 1.5 1.5V17a5 5 0 0 1-10 0z" fill="#5059c9"/><circle cx="13.5" cy="4.5" r="4" fill="#8b8ff0"/><path d="M7 9h13a1 1 0 0 1 1 1v8a7 7 0 0 1-14 0z" fill="#7b83eb"/><rect x="1" y="6" width="14" height="14" rx="1.5" fill="#fff"/><path d="M4.5 9.5h7M8 9.5v7.5" stroke="#4b53bc" stroke-width="2"/></svg><svg class="a" style="left:580px;top:733px" width="24" height="22" viewBox="0 0 24 22"><defs><linearGradient id="ml" x1="0" y1="0" x2="0" y2="1"><stop offset="0" stop-color="#28a8f0"/><stop offset="1" stop-color="#1a8ae0"/></linearGradient></defs><path d="M0.5 9L12 0.5L23.5 9z" fill="#0f5cc0"/><rect x="0.5" y="9" width="23" height="12.5" fill="url(#ml)"/><path d="M3 7.5L12 14L21 7.5V5H3z" fill="#fff"/><path d="M0.5 9L12 16.5L23.5 9" fill="none" stroke="#50c0f8" stroke-width="1"/></svg><svg class="a" style="left:624px;top:733px" width="25" height="23" viewBox="0 0 25 23"><path d="M1 3a2 2 0 0 1 2-2h6l2.5 3H22a2 2 0 0 1 2 2v2H1z" fill="#e8a810"/><rect x="1" y="6" width="23" height="16" rx="1.5" fill="#ffc83d"/><rect x="7" y="17" width="11" height="4" rx="1" fill="#2a7fd8"/></svg><svg class="a" style="left:668px;top:733px" width="24" height="24" viewBox="0 0 24 24"><rect x="0" y="0" width="24" height="24" fill="#ec4a1c"/><path d="M10 4C14 4 15 8 13 12L9 20C8 21 6 21 5.5 19.5L8 12C9 9 8 6 10 4z" fill="#fff"/><path d="M14 5C17 5 19 8 17.5 11L14.5 18C13.5 19.5 12 19 12 17.5L14.5 11C15.5 9 14 7 14 5z" fill="#fff"/></svg><svg class="a" style="left:711px;top:733px" width="25" height="24" viewBox="0 0 25 24"><rect x="6" y="1" width="18" height="22" rx="2" fill="#21a366"/><rect x="6" y="8" width="18" height="7" fill="#107c41"/><rect x="6" y="15" width="18" height="8" rx="2" fill="#185c37"/><rect x="1" y="6" width="13" height="13" rx="1.5" fill="#107c41"/><path d="M4.5 9l6 7M10.5 9l-6 7" stroke="#fff" stroke-width="1.8"/></svg><svg class="a" style="left:756px;top:733px" width="25" height="24" viewBox="0 0 25 24"><rect x="6" y="1" width="18" height="22" rx="2" fill="#41a5ee"/><rect x="6" y="8" width="18" height="7" fill="#2b7cd3"/><rect x="6" y="15" width="18" height="8" rx="2" fill="#185abd"/><rect x="1" y="6" width="13" height="13" rx="1.5" fill="#185abd"/><path d="M3.5 9.5l1.8 6.5 2.2-5 2.2 5 1.8-6.5" stroke="#fff" stroke-width="1.4" fill="none"/></svg><svg class="a" style="left:800px;top:733px" width="24" height="25" viewBox="0 0 24 25"><circle cx="12" cy="12.5" r="11.8" fill="#fff"/><path d="M12 5.5a7 7 0 1 1-3.6 13L5.3 19.5l1-3A7 7 0 0 1 12 5.5z" fill="none" stroke="#25d366" stroke-width="1.5"/><path d="M9 10c0 2.5 2.2 5 5 5.3l1.2-1.2-1.6-.9-.8.7c-.9-.4-1.7-1.2-2.1-2.1l.7-.8-.9-1.6z" fill="#25d366"/></svg><div class="a" style="left:813px;top:727px;width:15.5px;height:15.5px;border-radius:50%;background:#1a1a1a"></div><div class="a" style="left:816.5px;top:729px;font-size:12.5px;color:#fff;line-height:12px">9</div><svg class="a" style="left:843px;top:733px" width="26" height="26" viewBox="0 0 26 26"><path d="M13 13L2.61 7A12 12 0 0 1 23.39 7z" fill="#e33b2e"/><path d="M13 13L23.39 7A12 12 0 0 1 13 25z" fill="#fbc02d"/><path d="M13 13L13 25A12 12 0 0 1 2.61 7z" fill="#2ea44f"/><circle cx="13" cy="13" r="5.6" fill="#fff"/><circle cx="13" cy="13" r="4.4" fill="#3b82f0"/></svg><div class="a" style="left:857px;top:727px;width:15px;height:15px;border-radius:50%;background:#3a6a8a;border:1.5px solid #8ab"></div><div class="a" style="left:861px;top:731px;width:7px;height:7px;border-radius:50%;background:#6a9a60"></div><svg class="a" style="left:888px;top:733px" width="26" height="26" viewBox="0 0 26 26"><path d="M13 13L2.61 7A12 12 0 0 1 23.39 7z" fill="#e33b2e"/><path d="M13 13L23.39 7A12 12 0 0 1 13 25z" fill="#fbc02d"/><path d="M13 13L13 25A12 12 0 0 1 2.61 7z" fill="#2ea44f"/><circle cx="13" cy="13" r="5.6" fill="#fff"/><circle cx="13" cy="13" r="4.4" fill="#3b82f0"/></svg><div class="a" style="left:901px;top:726px;width:16px;height:16px;border-radius:50%;background:#a89080"></div><div class="a" style="left:905px;top:730px;width:7px;height:10px;border-radius:40%;background:#6a5040"></div><div class="a" style="left:924px;top:724px;width:40px;height:39px;border-radius:4px;background:rgba(255,255,255,0.08)"></div><svg class="a" style="left:931px;top:732px" width="25" height="25" viewBox="0 0 25 25"><circle cx="12.5" cy="12.5" r="12.3" fill="#0b5cff"/><text x="12.5" y="16.2" font-family="Liberation Sans" font-size="10.5" font-weight="bold" fill="#fff" text-anchor="middle">zm</text></svg><div class="a" style="left:936px;top:760px;width:16px;height:3px;border-radius:2px;background:#7fd4f2"></div><svg class="a" style="left:977px;top:733px" width="23" height="23" viewBox="0 0 23 23"><defs><linearGradient id="ph" x1="0" y1="0" x2="0" y2="1"><stop offset="0" stop-color="#62c8ff"/><stop offset="1" stop-color="#0a64c8"/></linearGradient></defs><rect x="0" y="0" width="23" height="23" rx="4" fill="url(#ph)"/><path d="M0 19l8-8 6 6 4-3 5 5v1a3 3 0 0 1-3 3H3a3 3 0 0 1-3-3z" fill="#0b4fa8"/><circle cx="16.5" cy="6.5" r="2.3" fill="#fff"/></svg><div class="a" style="left:501px;top:760px;width:6px;height:3px;border-radius:2px;background:#9aa8ad"></div><div class="a" style="left:633px;top:760px;width:6px;height:3px;border-radius:2px;background:#9aa8ad"></div><div class="a" style="left:677px;top:760px;width:6px;height:3px;border-radius:2px;background:#9aa8ad"></div><div class="a" style="left:721px;top:760px;width:6px;height:3px;border-radius:2px;background:#9aa8ad"></div><div class="a" style="left:765px;top:760px;width:6px;height:3px;border-radius:2px;background:#9aa8ad"></div><div class="a" style="left:809px;top:760px;width:6px;height:3px;border-radius:2px;background:#9aa8ad"></div><div class="a" style="left:853px;top:760px;width:6px;height:3px;border-radius:2px;background:#9aa8ad"></div><div class="a" style="left:897px;top:760px;width:6px;height:3px;border-radius:2px;background:#9aa8ad"></div><div class="a" style="left:985px;top:760px;width:6px;height:3px;border-radius:2px;background:#9aa8ad"></div><svg class="a" style="left:1078px;top:740px" width="12" height="9" viewBox="0 0 12 9"><path d="M1 7L6 2L11 7" stroke="#fff" stroke-width="1.5" fill="none"/></svg><svg class="a" style="left:1109px;top:736px" width="13" height="16" viewBox="0 0 13 16"><rect x="3.2" y="0.8" width="6" height="10" rx="3" stroke="#7fd8d8" stroke-width="1.4" fill="none"/><path d="M1 7.5a5.2 5.2 0 0 0 10.4 0M6.2 12.8v3" stroke="#7fd8d8" stroke-width="1.4" fill="none"/></svg><svg class="a" style="left:1139px;top:736px" width="18" height="16" viewBox="0 0 18 16"><rect x="0.8" y="1.5" width="13" height="10" rx="1" stroke="#fff" stroke-width="1.3" fill="none"/><path d="M4 15h6M7 11.5V15" stroke="#fff" stroke-width="1.3"/><rect x="13" y="0.5" width="4" height="6" rx="1" fill="#1c4b58" stroke="#fff" stroke-width="1.1"/><path d="M15 6.5v9" stroke="#fff" stroke-width="1.1"/></svg><svg class="a" style="left:1163px;top:737px" width="17" height="15" viewBox="0 0 17 15"><path d="M1 5h3l4-4v13l-4-4H1z" stroke="#fff" stroke-width="1.2" fill="none"/><path d="M10.5 4.5a3.5 3.5 0 0 1 0 6M12.5 2.5a6.5 6.5 0 0 1 0 10" stroke="#fff" stroke-width="1.2" fill="none"/><path d="M14.5 1a8.5 8.5 0 0 1 0 13" stroke="#9ab" stroke-width="1" fill="none"/></svg><svg class="a" style="left:1187px;top:736px" width="17" height="16" viewBox="0 0 17 16"><rect x="1" y="4" width="14" height="10" rx="1.5" stroke="#fff" stroke-width="1.3" fill="none"/><rect x="15" y="7" width="1.8" height="4" fill="#fff"/><rect x="2.5" y="5.5" width="11" height="7" fill="#fff" opacity=".85"/><path d="M6 0L3 5h3L5 9" stroke="#fff" stroke-width="1.3" fill="#1c4b58"/></svg><div class="a" style="left:1254px;top:730px;font-size:12px;color:#fff;line-height:12px">10:13</div><div class="a" style="left:1221px;top:747px;font-size:12.4px;color:#fff;line-height:12px">22/07/2024</div><svg class="a" style="left:1290px;top:736px" width="16" height="17" viewBox="0 0 16 17"><path d="M3 11V7a5 5 0 0 1 10 0v4l1.5 2h-13z" fill="#fff"/><path d="M6.5 14a1.5 1.5 0 0 0 3 0" fill="#fff"/><path d="M6 5h3.5L6 9h3.5" stroke="#1c4b58" stroke-width="1.1" fill="none"/><path d="M11 0.5h3l-3 3.5h3" stroke="#fff" stroke-width="1" fill="none"/></svg><svg class="a" style="left:1322px;top:733px" width="25" height="24" viewBox="0 0 25 24"><defs><linearGradient id="cp1" x1="0" y1="0" x2="0" y2="1"><stop offset="0" stop-color="#1e9cf0"/><stop offset=".55" stop-color="#3ac890"/><stop offset="1" stop-color="#f4c020"/></linearGradient><linearGradient id="cp2" x1="0" y1="0" x2="1" y2="1"><stop offset="0" stop-color="#7a60f0"/><stop offset="1" stop-color="#f060b0"/></linearGradient></defs><path d="M7 1h6c2 0 3 1.5 2.5 3.5L11 19c-.5 1.5-1.5 2-3 2H3c-2 0-3-1.5-2.5-3.5L5 3c.5-1.5 1-2 2-2z" fill="url(#cp1)"/><path d="M15 5h5c2.5 0 3.5 2 3 4l-3 9c-.5 1.5-1.5 2-3 2h-5z" fill="url(#cp2)"/><rect x="7.5" y="14.5" width="17" height="8.5" rx="2" fill="#f5c400"/><text x="16" y="21.3" font-family="Liberation Sans" font-size="6.8" font-weight="bold" fill="#222" text-anchor="middle">PRE</text></svg>
</body></html>
